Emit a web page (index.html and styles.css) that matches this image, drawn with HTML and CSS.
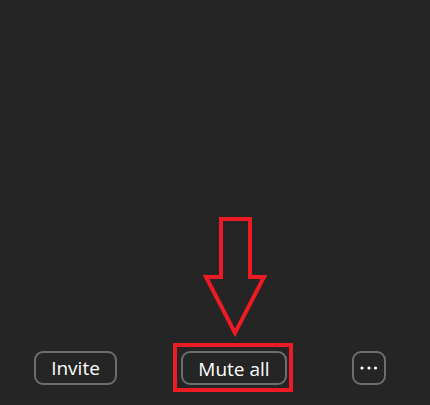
FILE: index.html
```html
<!DOCTYPE html>
<html lang="en">
<head>
<meta charset="utf-8">
<title>Participants</title>
<link rel="stylesheet" href="styles.css">
</head>
<body>
<div class="panel">
  <div class="content"></div>
  <div class="toolbar">
    <button class="btn btn-invite">Invite</button>
    <span class="highlight"><button class="btn btn-mute">Mute all</button></span>
    <button class="btn btn-more" aria-label="More">
      <svg width="18" height="4" viewBox="0 0 18 4"><circle cx="2" cy="2" r="1.6" fill="#fff"/><circle cx="9" cy="2" r="1.6" fill="#fff"/><circle cx="15.5" cy="2" r="1.6" fill="#fff"/></svg>
    </button>
  </div>
  <svg class="arrow" width="430" height="405" viewBox="0 0 430 405">
    <polygon points="221,219 250,219 250,277 264,277 235,333 206,277 221,277" fill="none" stroke="#ed1c24" stroke-width="4" stroke-linejoin="miter"/>
  </svg>
</div>
</body>
</html>
```
FILE: styles.css
```css
html, body {
  margin: 0;
  padding: 0;
  background: #252525;
}
.panel {
  position: relative;
  width: 430px;
  height: 405px;
  display: flex;
  flex-direction: column;
  font-family: "Open Sans", "Noto Sans", sans-serif;
}
.content {
  flex: 1;
}
.toolbar {
  display: flex;
  align-items: center;
  padding: 0 0 13px 34px;
  height: 49px;
}
.btn {
  box-sizing: border-box;
  height: 34px;
  background: transparent;
  border: 2px solid #6e6e6e;
  border-radius: 9px;
  color: #ffffff;
  font-family: "Open Sans", "Noto Sans", sans-serif;
  font-size: 19px;
  padding: 2px 0 0 0;
  display: flex;
  align-items: center;
  justify-content: center;
  line-height: 1;
}
.btn-invite {
  width: 83px;
  margin-right: 56px;
}
.highlight {
  display: flex;
  border: 4px solid #ed1c24;
  padding: 4px 2px 3px 4px;
  margin-right: 59px;
}
.btn-mute {
  width: 106px;
}
.btn-more {
  width: 34px;
  padding: 0;
}
.arrow {
  position: absolute;
  left: 0;
  top: 0;
  pointer-events: none;
}
```
